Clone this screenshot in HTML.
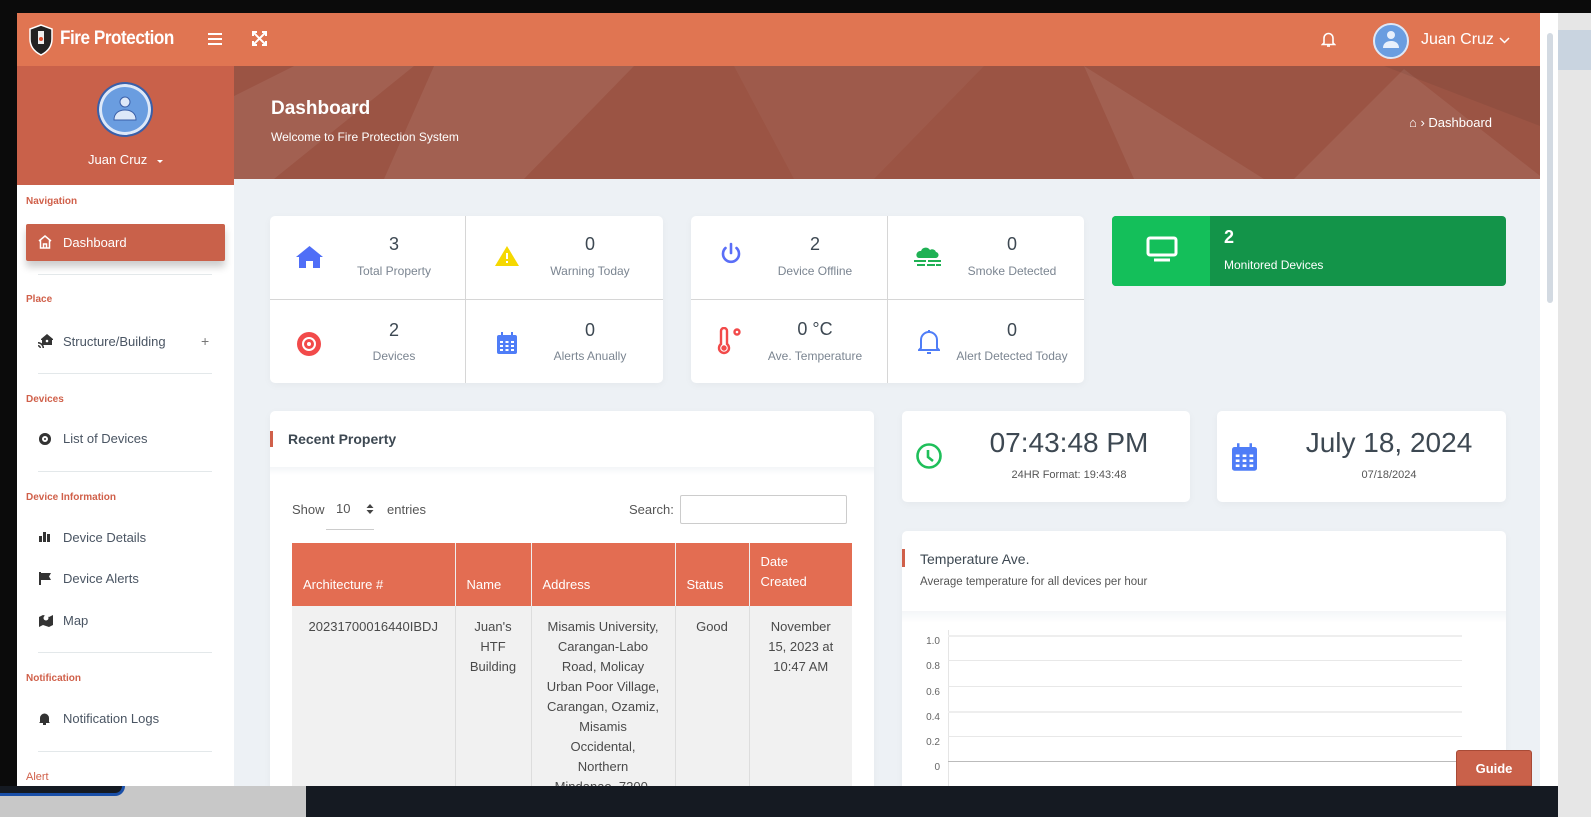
<!DOCTYPE html>
<html><head><meta charset="utf-8"><style>
*{margin:0;padding:0;box-sizing:border-box}
body{width:1591px;height:817px;overflow:hidden;background:#0b0b0b;font-family:"Liberation Sans",sans-serif;position:relative;color:#3d4852}
.a{position:absolute}
.hdr{left:17px;top:13px;width:1523px;height:53px;background:#e07552}
.side{left:17px;top:66px;width:217px;height:720px;background:#fff}
.prof{left:17px;top:66px;width:217px;height:119px;background:#c9614a}
.main{left:234px;top:66px;width:1306px;height:720px;background:#edf1f5;overflow:hidden}
.ban{left:0;top:0;width:1306px;height:113px;background:#9b5444;overflow:hidden}
.sec{font-size:10px;font-weight:bold;color:#d0604a;left:26px}
.it{font-size:13px;color:#4a5563;left:63px}
.hr{left:38px;width:174px;height:1px;background:#e3e8ea}
.card{background:#fff;border-radius:5px;box-shadow:0 2px 8px rgba(0,0,0,.04)}
.num{font-size:18px;color:#3d4852;text-align:center;width:100px}
.lbl{font-size:12px;color:#7b8591;text-align:center;width:140px}
th,td{font-weight:normal}
</style></head><body>
<div class="a" style="left:1558px;top:0;width:33px;height:817px;background:#e6e6e6"></div>
<div class="a" style="left:1558px;top:0;width:33px;height:13px;background:#0b0b0b"></div>
<div class="a" style="left:1558px;top:30px;width:33px;height:40px;background:#c9d4e0"></div>
<div class="a" style="left:1540px;top:13px;width:18px;height:773px;background:#fff"></div>
<div class="a" style="left:1547px;top:33px;width:6px;height:270px;background:#d3dae2;border-radius:3px"></div>
<div class="a" style="left:0;top:786px;width:306px;height:31px;background:#c8c8c8"></div>
<div class="a" style="left:0;top:786px;width:125px;height:10px;border-bottom:3px solid #1a4fa8;border-right:3px solid #1a4fa8;border-radius:0 0 10px 0;background:#151a22"></div>
<div class="a" style="left:306px;top:786px;width:1252px;height:31px;background:#151a22"></div>

<div class="a hdr"></div>
<svg class="a" style="left:27px;top:24px" width="28" height="32" viewBox="0 0 28 32"><path d="M14 1L3 5v10c0 8 5 13 11 16 6-3 11-8 11-16V5z" fill="#222" stroke="#fff" stroke-width="1.5"/><rect x="11" y="7" width="6" height="13" fill="#eee"/><circle cx="14" cy="15" r="2" fill="#e05030"/></svg>
<div class="a" style="left:60px;top:28px;font-size:19px;font-weight:bold;color:#fff;letter-spacing:-0.5px;transform:scaleX(.9);transform-origin:left">Fire Protection</div>
<div class="a" style="left:208px;top:33px;width:14px;height:2px;background:#fff;box-shadow:0 5px 0 #fff,0 10px 0 #fff"></div>
<svg class="a" style="left:252px;top:31px" width="15" height="15" viewBox="0 0 15 15" stroke="#fff" stroke-width="2" fill="none"><path d="M1 1l13 13M14 1L1 14M1 5V1h4M10 1h4v4M1 10v4h4M14 10v4h-4"/></svg>
<svg class="a" style="left:1321px;top:31px" width="15" height="16" viewBox="0 0 15 16" fill="none" stroke="#fff" stroke-width="1.6"><path d="M3 12V7a4.5 4.5 0 019 0v5l1.5 1.5h-12z"/><path d="M6 15h3"/></svg>
<div class="a" style="left:1373px;top:23px;width:36px;height:36px;border-radius:50%;background:#6a9de0;border:2px solid #dde8f8"></div>
<svg class="a" style="left:1381px;top:29px" width="20" height="22" viewBox="0 0 20 22" fill="#e8f0fc"><circle cx="10" cy="6" r="4"/><path d="M2 19c0-5 4-7 8-7s8 2 8 7z"/></svg>
<div class="a" style="left:1421px;top:31px;font-size:16px;color:#fff">Juan Cruz</div>
<svg class="a" style="left:1499px;top:37px" width="11" height="7"><path d="M1 1l4.5 4.5L10 1" stroke="#fff" stroke-width="1.5" fill="none"/></svg>

<div class="a side"></div>
<div class="a prof"></div>
<div class="a" style="left:97px;top:82px;width:56px;height:55px;border-radius:50%;background:#6a9de0;border:2px solid #3a5fa8;box-shadow:inset 0 0 0 3px #dde8f8"></div>
<svg class="a" style="left:110px;top:93px" width="30" height="30" viewBox="0 0 30 30" fill="#dde8f8" stroke="#3a5fa8" stroke-width="1"><circle cx="15" cy="9" r="5"/><path d="M4 27c0-7 5-10 11-10s11 3 11 10z"/></svg>
<div class="a" style="left:88px;top:152px;font-size:13px;color:#fff">Juan Cruz</div>
<div class="a" style="left:157px;top:160px;border:3.5px solid transparent;border-top-color:#fff"></div>

<div class="a sec" style="top:196px">Navigation</div>
<div class="a" style="left:26px;top:224px;width:199px;height:37px;background:#c9614a;border-radius:2px;box-shadow:0 6px 8px rgba(0,0,0,.2)"></div>
<svg class="a" style="left:38px;top:235px" width="14" height="14" viewBox="0 0 14 14" fill="none" stroke="#fff" stroke-width="1.5"><path d="M1 6L7 1l6 5M2.5 5v8h9V5M5.5 13V9h3v4"/></svg>
<div class="a" style="left:63px;top:235px;font-size:13px;color:#fff">Dashboard</div>
<div class="a hr" style="top:274px"></div>
<div class="a sec" style="top:294px">Place</div>
<svg class="a" style="left:38px;top:334px" width="16" height="14" viewBox="0 0 16 14" fill="#333"><path d="M9 0L3 5v1h1v5h10V6h1V5z"/><circle cx="9" cy="7" r="1.3" fill="#fff"/><path d="M0 8a6 6 0 016 6H4.5A4.5 4.5 0 000 9.5zM0 11a3 3 0 013 3H1.5A1.5 1.5 0 000 12.5z"/></svg>
<div class="a it" style="top:334px">Structure/Building</div>
<div class="a" style="left:201px;top:333px;font-size:14px;color:#777">+</div>
<div class="a hr" style="top:373px"></div>
<div class="a sec" style="top:394px">Devices</div>
<div class="a" style="left:39px;top:433px;width:12px;height:12px;border-radius:50%;background:#333;box-shadow:inset 0 0 0 3px #333,inset 0 0 0 5px #fff"></div>
<div class="a it" style="top:431px">List of Devices</div>
<div class="a hr" style="top:471px"></div>
<div class="a sec" style="top:492px">Device Information</div>
<svg class="a" style="left:39px;top:531px" width="12" height="11" fill="#333"><rect x="0" y="5" width="3" height="6"/><rect x="4" y="1" width="3" height="10"/><rect x="8" y="3" width="3" height="8"/></svg>
<div class="a it" style="top:530px">Device Details</div>
<svg class="a" style="left:39px;top:572px" width="12" height="13" fill="#333"><rect x="0" y="0" width="2" height="13"/><path d="M2 1h10l-2 3.5 2 3.5H2z"/></svg>
<div class="a it" style="top:571px">Device Alerts</div>
<svg class="a" style="left:39px;top:614px" width="14" height="13" fill="#333"><path d="M0 3l4-2 6 2 4-2v10l-4 2-6-2-4 2z"/><circle cx="7" cy="4" r="2.5" fill="#fff"/></svg>
<div class="a it" style="top:613px">Map</div>
<div class="a hr" style="top:652px"></div>
<div class="a sec" style="top:673px">Notification</div>
<svg class="a" style="left:39px;top:712px" width="11" height="13" fill="#333"><path d="M1 10V6a4.5 4.5 0 019 0v4l1 1H0z"/><rect x="4" y="11" width="3" height="2"/></svg>
<div class="a it" style="top:711px">Notification Logs</div>
<div class="a hr" style="top:751px"></div>
<div class="a sec" style="top:771px;font-weight:normal;font-size:11px">Alert</div>

<div class="a main">
 <div class="a ban">
  <svg class="a" style="left:0;top:0" width="1306" height="113"><g fill="#fff" fill-opacity=".07"><path d="M0 30L60 0h120L40 113H0z"/><path d="M200 0h200L290 113H150z"/><path d="M500 0h250L640 113H560z" fill-opacity=".04"/><path d="M850 0l180 113H900z"/><path d="M1060 113l110-110 140 110z"/><path d="M1150 0h156v60z" fill="#000" fill-opacity=".06"/></g></svg>
  <div class="a" style="left:37px;top:32px;font-size:19px;font-weight:bold;color:#fff">Dashboard</div>
  <div class="a" style="left:37px;top:64px;font-size:12px;color:#fff">Welcome to Fire Protection System</div>
  <div class="a" style="left:1175px;top:49px;font-size:13px;color:#fff">&#8962; › Dashboard</div>
 </div>
 <div class="a card" style="left:36px;top:150px;width:393px;height:167px"></div>
 <div class="a" style="left:231px;top:150px;width:1px;height:167px;background:#d6d6d6"></div>
 <div class="a" style="left:36px;top:233px;width:393px;height:1px;background:#d6d6d6"></div>
 <div class="a card" style="left:457px;top:150px;width:393px;height:167px"></div>
 <div class="a" style="left:653px;top:150px;width:1px;height:167px;background:#d6d6d6"></div>
 <div class="a" style="left:457px;top:233px;width:393px;height:1px;background:#d6d6d6"></div>

 <svg class="a" style="left:62px;top:180px" width="27" height="22" viewBox="0 0 27 22" fill="#4f6ef7"><path d="M13.5 0L0 11h3v11h7v-7h7v7h7V11h3z"/></svg>
 <div class="a num" style="left:110px;top:168px">3</div><div class="a lbl" style="left:90px;top:198px">Total Property</div>
 <svg class="a" style="left:261px;top:180px" width="24" height="20" viewBox="0 0 24 20"><path d="M12 0L24 20H0z" fill="#f5d800"/><rect x="11" y="7" width="2" height="6" fill="#fff"/><rect x="11" y="15" width="2" height="2" fill="#fff"/></svg>
 <div class="a num" style="left:306px;top:168px">0</div><div class="a lbl" style="left:286px;top:198px">Warning Today</div>
 <div class="a" style="left:63px;top:266px;width:24px;height:24px;border-radius:50%;background:#f24a4a"></div>
 <div class="a" style="left:68px;top:271px;width:14px;height:14px;border-radius:50%;border:2px solid #fff"></div>
 <div class="a" style="left:73px;top:276px;width:4px;height:4px;border-radius:50%;background:#fff"></div>
 <div class="a num" style="left:110px;top:254px">2</div><div class="a lbl" style="left:90px;top:283px">Devices</div>
 <svg class="a" style="left:263px;top:266px" width="20" height="22" viewBox="0 0 20 22" fill="#4f7df7"><rect x="0" y="3" width="20" height="19" rx="2"/><rect x="4" y="0" width="2" height="5"/><rect x="14" y="0" width="2" height="5"/><g fill="#fff"><rect x="3" y="9" width="3" height="2"/><rect x="8.5" y="9" width="3" height="2"/><rect x="14" y="9" width="3" height="2"/><rect x="3" y="13" width="3" height="2"/><rect x="8.5" y="13" width="3" height="2"/><rect x="14" y="13" width="3" height="2"/><rect x="3" y="17" width="3" height="2"/><rect x="8.5" y="17" width="3" height="2"/><rect x="14" y="17" width="3" height="2"/></g></svg>
 <div class="a num" style="left:306px;top:254px">0</div><div class="a lbl" style="left:286px;top:283px">Alerts Anually</div>

 <svg class="a" style="left:486px;top:176px" width="22" height="24" viewBox="0 0 22 24" fill="none" stroke="#5a6ef7" stroke-width="2.6" stroke-linecap="round"><path d="M11 2v9"/><path d="M5.5 6a8 8 0 1011 0"/></svg>
 <div class="a num" style="left:531px;top:168px">2</div><div class="a lbl" style="left:511px;top:198px">Device Offline</div>
 <svg class="a" style="left:680px;top:177px" width="28" height="24" viewBox="0 0 28 24" fill="#1fb154"><path d="M3 14a4 4 0 014-6 5 5 0 019-1 4 4 0 016 2 3 3 0 01-1 6H5a3 3 0 01-2-1z"/><rect x="0" y="17" width="12" height="2"/><rect x="14" y="17" width="13" height="2"/><rect x="3" y="21" width="8" height="2"/><rect x="13" y="21" width="8" height="2"/><rect x="22" y="21" width="5" height="2"/></svg>
 <div class="a num" style="left:728px;top:168px">0</div><div class="a lbl" style="left:708px;top:198px">Smoke Detected</div>
 <svg class="a" style="left:483px;top:261px" width="26" height="28" viewBox="0 0 26 28" fill="none" stroke="#f24a4a" stroke-width="2.4"><path d="M4 17V4a3 3 0 016 0v13a5 5 0 11-6 0z"/><circle cx="7" cy="21" r="1.5" fill="#f24a4a"/><circle cx="20" cy="5" r="2.5"/></svg>
 <div class="a num" style="left:531px;top:253px">0 °C</div><div class="a lbl" style="left:511px;top:283px">Ave. Temperature</div>
 <svg class="a" style="left:684px;top:263px" width="22" height="26" viewBox="0 0 22 26" fill="none" stroke="#4f7df7" stroke-width="2"><path d="M3 19V11a8 8 0 0116 0v8l2 2H1z"/><path d="M9 24h4"/><path d="M11 1v2"/></svg>
 <div class="a num" style="left:728px;top:254px">0</div><div class="a lbl" style="left:701px;top:283px;width:154px">Alert Detected Today</div>

 <div class="a" style="left:878px;top:150px;width:394px;height:70px;background:#139449;border-radius:4px;overflow:hidden"><div style="width:98px;height:70px;background:#14bf5a"></div></div>
 <svg class="a" style="left:912px;top:170px" width="32" height="26" viewBox="0 0 32 26" fill="none" stroke="#fff" stroke-width="3"><rect x="2" y="2" width="28" height="17" rx="2"/><path d="M8 24h16"/></svg>
 <div class="a" style="left:990px;top:161px;font-size:18px;font-weight:bold;color:#fff">2</div>
 <div class="a" style="left:990px;top:192px;font-size:12px;color:#fff">Monitored Devices</div>

 <div class="a card" style="left:36px;top:345px;width:604px;height:400px;overflow:hidden">
  <div class="a" style="left:0;top:20px;width:3px;height:16px;background:#d0604a"></div>
  <div class="a" style="left:18px;top:20px;font-size:14px;font-weight:bold;color:#3d4852">Recent Property</div>
  <div class="a" style="left:0;top:56px;width:604px;height:8px;background:linear-gradient(#f3f5f7,#fff)"></div>
  <div class="a" style="left:22px;top:91px;font-size:13px;color:#555">Show</div>
  <div class="a" style="left:66px;top:90px;font-size:13px;color:#555">10</div>
  <svg class="a" style="left:96px;top:93px" width="8" height="10" fill="#444"><path d="M4 0l3.5 4h-7zM4 10L.5 6h7z"/></svg>
  <div class="a" style="left:56px;top:118px;width:48px;height:1px;background:#ccc"></div>
  <div class="a" style="left:117px;top:91px;font-size:13px;color:#555">entries</div>
  <div class="a" style="left:359px;top:91px;font-size:13px;color:#555">Search:</div>
  <div class="a" style="left:410px;top:84px;width:167px;height:29px;border:1px solid #ccc;border-radius:2px"></div>
  <div class="a" style="left:22px;top:132px;width:560px;height:300px;background:#f1f1f1"></div>
  <table class="a" style="left:22px;top:132px;width:560px;border-collapse:collapse;font-size:13px">
   <tr style="background:#e36d52;color:#fff;height:63px;text-align:left;vertical-align:bottom">
    <th style="width:163px;padding:0 11px 14px;border-right:1px solid #eee">Architecture #</th>
    <th style="width:76px;padding:0 11px 14px;border-right:1px solid #eee">Name</th>
    <th style="width:144px;padding:0 11px 14px;border-right:1px solid #eee">Address</th>
    <th style="width:74px;padding:0 11px 14px;border-right:1px solid #eee">Status</th>
    <th style="padding:0 11px 14px;line-height:20px">Date<br>Created</th>
   </tr>
   <tr style="vertical-align:top;text-align:center;color:#4a4a4a;line-height:20px">
    <td style="padding:11px 4px;border-right:1px solid #ddd">20231700016440IBDJ</td>
    <td style="padding:11px 4px;border-right:1px solid #ddd">Juan's<br>HTF<br>Building</td>
    <td style="padding:11px 4px;border-right:1px solid #ddd">Misamis University,<br>Carangan-Labo<br>Road, Molicay<br>Urban Poor Village,<br>Carangan, Ozamiz,<br>Misamis<br>Occidental,<br>Northern<br>Mindanao, 7200,</td>
    <td style="padding:11px 4px;border-right:1px solid #ddd">Good</td>
    <td style="padding:11px 4px">November<br>15, 2023 at<br>10:47 AM</td>
   </tr>
  </table>
 </div>

 <div class="a card" style="left:668px;top:345px;width:288px;height:91px"></div>
 <svg class="a" style="left:681px;top:376px" width="28" height="28" viewBox="0 0 28 28" fill="none" stroke="#1fbf5a" stroke-width="2.6"><circle cx="14" cy="14" r="11.5"/><path d="M13 8v7l5 4"/></svg>
 <div class="a" style="left:740px;top:361px;width:190px;text-align:center;font-size:28px;color:#3d4852">07:43:48 PM</div>
 <div class="a" style="left:740px;top:403px;width:190px;text-align:center;font-size:11px;color:#555">24HR Format: 19:43:48</div>
 <div class="a card" style="left:983px;top:345px;width:289px;height:91px"></div>
 <svg class="a" style="left:998px;top:377px" width="25" height="28" viewBox="0 0 20 22" fill="#4f7df7"><rect x="0" y="3" width="20" height="19" rx="2"/><rect x="4" y="0" width="2" height="5"/><rect x="14" y="0" width="2" height="5"/><g fill="#fff"><rect x="3" y="9" width="3" height="2"/><rect x="8.5" y="9" width="3" height="2"/><rect x="14" y="9" width="3" height="2"/><rect x="3" y="13" width="3" height="2"/><rect x="8.5" y="13" width="3" height="2"/><rect x="14" y="13" width="3" height="2"/><rect x="3" y="17" width="3" height="2"/><rect x="8.5" y="17" width="3" height="2"/><rect x="14" y="17" width="3" height="2"/></g></svg>
 <div class="a" style="left:1050px;top:361px;width:210px;text-align:center;font-size:28px;color:#3d4852">July 18, 2024</div>
 <div class="a" style="left:1050px;top:403px;width:210px;text-align:center;font-size:11px;color:#555">07/18/2024</div>

 <div class="a card" style="left:668px;top:465px;width:604px;height:300px;overflow:hidden">
  <div class="a" style="left:0;top:18px;width:3px;height:18px;background:#d0604a"></div>
  <div class="a" style="left:18px;top:20px;font-size:14px;color:#3d4852">Temperature Ave.</div>
  <div class="a" style="left:18px;top:45px;font-size:11.5px;color:#555">Average temperature for all devices per hour</div>
  <div class="a" style="left:0;top:80px;width:604px;height:12px;background:linear-gradient(#f4f6f8,#fff)"></div>
  <div class="a" style="left:46px;top:99px;width:1px;height:200px;background:#e5e5e5"></div>
  <div class="a" style="left:46px;top:104px;width:514px;height:2px;background:#eee"></div>
  <div class="a" style="left:46px;top:129px;width:514px;height:1px;background:#e8e8e8"></div>
  <div class="a" style="left:46px;top:155px;width:514px;height:1px;background:#e8e8e8"></div>
  <div class="a" style="left:46px;top:180px;width:514px;height:2px;background:#eee"></div>
  <div class="a" style="left:46px;top:205px;width:514px;height:1px;background:#e8e8e8"></div>
  <div class="a" style="left:46px;top:230px;width:514px;height:1px;background:#bbb"></div>
  <div style="position:absolute;left:18px;top:98px;font-size:10px;color:#666;line-height:25.3px;text-align:right;width:20px">1.0<br>0.8<br>0.6<br>0.4<br>0.2<br>0<br>-0.2</div>
 </div>
</div>
<div class="a" style="left:1456px;top:750px;width:76px;height:36px;background:#c9614a;border-radius:3px 3px 0 0;border:1px solid #a84a36;color:#fff;font-size:13px;font-weight:bold;text-align:center;line-height:36px">Guide</div>
</body></html>
